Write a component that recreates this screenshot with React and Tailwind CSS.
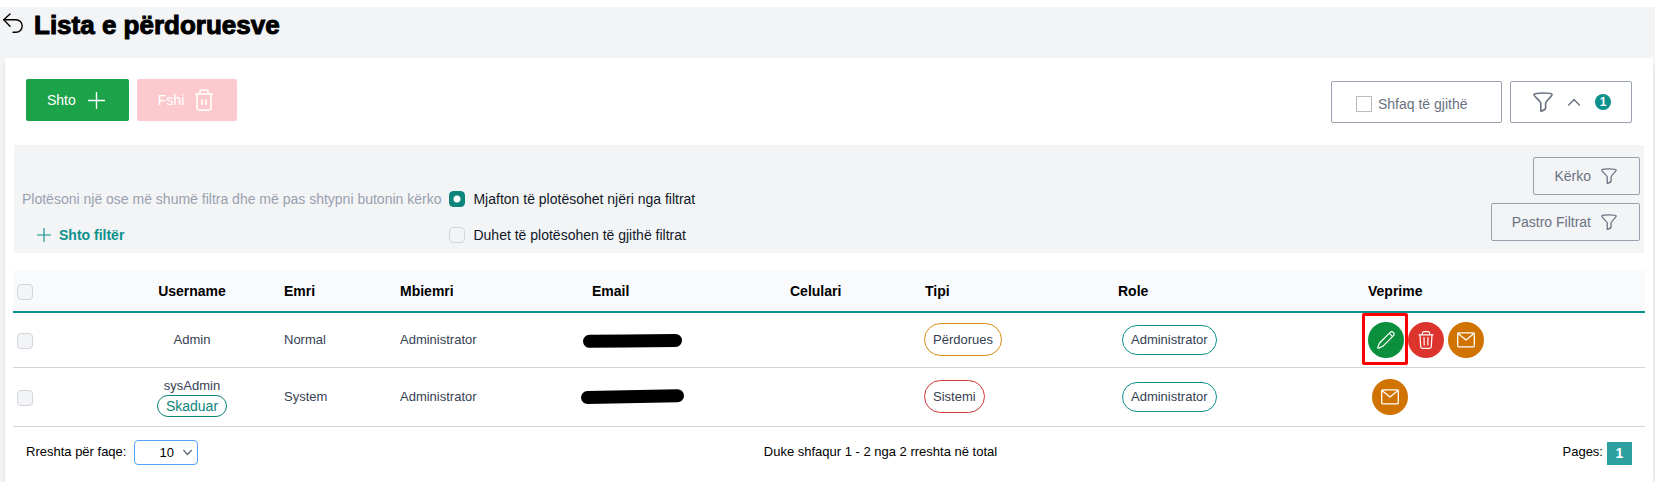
import { useState } from 'react'

const COLUMNS = [
  { label: 'Username', width: 'w-[168px]', align: 'text-center' },
  { label: 'Emri', width: 'w-[116px]', align: 'text-left' },
  { label: 'Mbiemri', width: 'w-[192px]', align: 'text-left' },
  { label: 'Email', width: 'w-[198px]', align: 'text-left' },
  { label: 'Celulari', width: 'w-[135px]', align: 'text-left' },
  { label: 'Tipi', width: 'w-[193px]', align: 'text-left' },
  { label: 'Role', width: 'w-[250px]', align: 'text-left' },
  { label: 'Veprime', width: 'w-[285px]', align: 'text-left' },
]

const USERS = [
  {
    id: 1,
    username: 'Admin',
    emri: 'Normal',
    mbiemri: 'Administrator',
    emailMask: 'M13.5 11.3L50 10.9L99.5 10.5',
    tipi: 'Përdorues',
    tipiBorder: 'border-[#d98a12]',
    role: 'Administrator',
    rowHeight: 'h-[55px]',
    editable: true,
  },
  {
    id: 2,
    username: 'sysAdmin',
    expired: true,
    emri: 'System',
    mbiemri: 'Administrator',
    emailMask: 'M11.5 10.5L50 9.8L101.5 8.8',
    tipi: 'Sistemi',
    tipiBorder: 'border-[#d03434]',
    role: 'Administrator',
    rowHeight: 'h-[59px]',
    editable: false,
  },
]

function Icon({ className, viewBox = '0 0 24 24', strokeWidth = 1.5, children }) {
  return (
    <svg className={`shrink-0 ${className}`} viewBox={viewBox} fill="none" stroke="currentColor"
      strokeWidth={strokeWidth} strokeLinecap="round" strokeLinejoin="round" aria-hidden="true">
      {children}
    </svg>
  )
}

function BackIcon() {
  return (
    <Icon className="w-5 h-5" viewBox="0 0 20 20" strokeWidth={1.4}>
      <path d="M7 1L0.8 6.8L7 13.2" />
      <path d="M1 6.8H13A6.2 6.2 0 0 1 13 19.2H10" />
    </Icon>
  )
}

function PlusIcon({ className }) {
  return (
    <Icon className={className} viewBox="0 0 16 16" strokeWidth={1.3}>
      <path d="M8 0.5V15.5M0.5 8H15.5" />
    </Icon>
  )
}

function FunnelIcon({ className }) {
  return (
    <Icon className={className} viewBox="0 0 20 20" strokeWidth={1.6}>
      <path d="M0.9 2.6C0.9 1.6 5 1 10 1S19.1 1.6 19.1 2.6C19.1 4.4 13 8.6 12.6 11.2V16.2C12.2 17.6 10.2 18.6 7.8 19.1V11.2C7.2 8.8 0.9 4.4 0.9 2.6Z" />
    </Icon>
  )
}

// Koshi me kapak të rrumbullakosur, për butonin "Fshi"
function BinIcon() {
  return (
    <Icon className="w-[18px] h-[22px]" viewBox="0 0 18 22" strokeWidth={1.6}>
      <path d="M0.8 5H17.2M4.8 5V3.6A2.6 2.6 0 0 1 7.4 1H10.6A2.6 2.6 0 0 1 13.2 3.6V5" />
      <path d="M2 5V18.6A2.6 2.6 0 0 0 4.6 21.2H13.4A2.6 2.6 0 0 0 16 18.6V5M7 11V15.5M11 11V15.5" />
    </Icon>
  )
}

function TrashIcon() {
  return (
    <Icon className="w-[18px] h-[18px]" viewBox="0 0 18 18" strokeWidth={1.2}>
      <path d="M2 3.8H16M5.4 3.8V2.3A1.6 1.6 0 0 1 7 0.7H11A1.6 1.6 0 0 1 12.6 2.3V3.8" />
      <path d="M3 4L3.7 15.7A1.7 1.7 0 0 0 5.4 17.3H12.6A1.7 1.7 0 0 0 14.3 15.7L15 4" />
      <path d="M7 6.6L7.2 14M11 6.6L10.8 14" />
    </Icon>
  )
}

function PencilIcon() {
  return (
    <Icon className="w-[18px] h-[18px]" viewBox="0 0 18 18" strokeWidth={1.2}>
      <path d="M0.7 16.4L2.6 12L13.2 1.4A2 2 0 0 1 16.2 1.4L16.5 1.7A2 2 0 0 1 16.5 4.6L6 15.1L1.6 17.2A0.7 0.7 0 0 1 0.7 16.4Z" />
      <path d="M12.4 2.4L15.4 5.4" />
    </Icon>
  )
}

function MailIcon() {
  return (
    <Icon className="w-[18px] h-[18px]" viewBox="0 0 18 18" strokeWidth={1.3}>
      <rect x="0.7" y="1.8" width="16.6" height="14" rx="1" />
      <path d="M1 2.6L9 9L17 2.6" />
    </Icon>
  )
}

function RowCheckbox({ label }) {
  return (
    <input type="checkbox" aria-label={label}
      className="block appearance-none w-4 h-4 ml-1 mt-[3px] rounded-sm border border-gray-300 bg-gray-100 checked:bg-teal-700" />
  )
}

function ActionButton({ label, color, children }) {
  return (
    <button aria-label={label}
      className={`w-9 h-9 rounded-full flex items-center justify-center text-white ${color}`}>
      {children}
    </button>
  )
}

function FilterMode({ checked, onChange, children }) {
  return (
    <label className="flex items-center gap-2 text-sm text-gray-900">
      <input type="radio" name="filterMode" checked={checked} onChange={onChange}
        className="appearance-none w-4 h-4 rounded-sm border border-gray-300 bg-gray-100 bg-origin-border checked:border-[#0d857b] checked:bg-[radial-gradient(circle,#ffffff_3px,#0d857b_4px)]" />
      {children}
    </label>
  )
}

export default function App() {
  const [mode, setMode] = useState('any')
  const [showAll, setShowAll] = useState(false)
  const [pageSize, setPageSize] = useState('10')

  return (
    <main className="min-h-screen flex flex-col bg-gray-100 border-t-[7px] border-white font-['Liberation_Sans',Arial,sans-serif] text-black">

      {/* Titulli */}
      <header className="flex items-start gap-[11px] px-[3px] pt-[2px] h-[51px]">
        <a href="#" aria-label="Kthehu" className="mt-1">
          <BackIcon />
        </a>
        <h1 className="text-[26px] leading-8 font-black [-webkit-text-stroke:1px_black]">Lista e përdoruesve</h1>
      </header>

      <section className="flex-1 ml-[5px] mr-[2px] bg-white shadow-md">

        {/* Butonat kryesorë */}
        <div className="flex items-start justify-between px-[21px] pt-[21px]">
          <div className="flex gap-2">
            <button className="flex items-center gap-3 h-[42px] pl-[21px] pr-6 rounded-xs bg-[#1ca34a] text-white text-sm">
              Shto
              <PlusIcon className="w-[17px] h-[17px]" />
            </button>
            <button disabled className="flex items-center gap-[11px] h-[42px] pl-[21px] pr-6 rounded-xs bg-[#fccace] text-white text-sm">
              Fshi
              <BinIcon />
            </button>
          </div>

          <div className="flex gap-2 pt-[2px] text-gray-500">
            <label className="flex items-center gap-[6px] w-[171px] h-[42px] pl-6 pt-1 border border-gray-400 rounded-xs text-sm">
              <input type="checkbox" checked={showAll} onChange={e => setShowAll(e.target.checked)}
                className="appearance-none w-4 h-4 border border-[#b9bcc2] bg-white checked:bg-teal-700" />
              Shfaq të gjithë
            </label>
            <button aria-label="Filtrat" className="flex items-center gap-[15px] w-[122px] h-[42px] pl-[22px] border border-gray-400 rounded-xs">
              <FunnelIcon className="w-5 h-5" />
              <Icon className="w-3 h-3" viewBox="0 0 12 12" strokeWidth={1.4}>
                <path d="M0.7 9L6 3.4L11.3 9" />
              </Icon>
              <span className="w-4 h-4 rounded-full bg-[#0d918c] text-white text-xs leading-4 font-bold">1</span>
            </button>
          </div>
        </div>

        {/* Paneli i filtrave */}
        <div className="flex justify-between mx-[9px] mt-[22px] h-[108px] pl-2 pr-1 bg-gray-100">
          <div className="grid grid-cols-[auto_auto] grid-rows-[36px_36px] items-center gap-x-2 pt-9">
            <p className="text-sm text-gray-400">Plotësoni një ose më shumë filtra dhe më pas shtypni butonin kërko</p>
            <FilterMode checked={mode === 'any'} onChange={() => setMode('any')}>
              Mjafton të plotësohet njëri nga filtrat
            </FilterMode>
            <button className="justify-self-start flex items-center gap-2 pl-[15px] text-sm font-bold text-[#0d918c]">
              <PlusIcon className="w-[14px] h-[14px]" />
              Shto filtër
            </button>
            <FilterMode checked={mode === 'all'} onChange={() => setMode('all')}>
              Duhet të plotësohen të gjithë filtrat
            </FilterMode>
          </div>

          <div className="flex flex-col items-end gap-2 pt-3 text-sm text-gray-500">
            <button className="flex items-center gap-[10px] h-[38px] pl-5 pr-[22px] border border-gray-400 rounded-xs">
              Kërko
              <FunnelIcon className="w-4 h-4" />
            </button>
            <button className="flex items-center gap-[10px] h-[38px] pl-5 pr-[22px] border border-gray-400 rounded-xs">
              Pastro Filtrat
              <FunnelIcon className="w-4 h-4" />
            </button>
          </div>
        </div>

        {/* Tabela */}
        <div className="mx-2 mt-[17px]">
          <table className="w-full table-fixed border-collapse text-[13px] leading-[18px] text-gray-700">
            <thead>
              <tr className="h-[42px] bg-gray-50 border-b-2 border-[#0d918c] text-sm text-black">
                <th className="w-[95px]">
                  <RowCheckbox label="Zgjidh të gjithë" />
                </th>
                {COLUMNS.map(col => (
                  <th key={col.label} className={`px-2 font-bold ${col.width} ${col.align}`}>
                    {col.label}
                  </th>
                ))}
              </tr>
            </thead>
            <tbody>
              {USERS.map(user => (
                <tr key={user.id} className={`border-b border-gray-300 ${user.rowHeight}`}>
                  <td><RowCheckbox label={`Zgjidh ${user.username}`} /></td>
                  <td className="px-2 text-center">
                    {user.username}
                    {user.expired && (
                      <span className="block w-fit mx-auto px-2 h-[22px] leading-5 border border-[#0d857b] rounded-full text-sm text-[#0d857b]">
                        Skaduar
                      </span>
                    )}
                  </td>
                  <td className="px-2">{user.emri}</td>
                  <td className="px-2">{user.mbiemri}</td>
                  <td>
                    <svg className="w-[110px] h-5 -ml-2" viewBox="0 0 110 20" fill="none" stroke="black"
                      strokeWidth="13" strokeLinecap="round" strokeLinejoin="round" aria-hidden="true">
                      <path d={user.emailMask} />
                    </svg>
                  </td>
                  <td />
                  <td className="pl-[7px]">
                    <span className={`inline-flex items-center h-[33px] px-2 border rounded-full ${user.tipiBorder}`}>
                      {user.tipi}
                    </span>
                  </td>
                  <td className="pl-3">
                    <span className="inline-flex items-center h-[30px] px-2 border border-[#0d918c] rounded-full">
                      {user.role}
                    </span>
                  </td>
                  <td className="pl-2">
                    {user.editable ? (
                      <div className="flex gap-1">
                        <div className="relative">
                          <ActionButton label="Ndrysho" color="bg-[#0a8f3c]"><PencilIcon /></ActionButton>
                          <span className="absolute -left-[6px] -top-[9px] w-[46px] h-[52px] border-3 border-[#ff0000] rounded-xs pointer-events-none" />
                        </div>
                        <ActionButton label="Fshi" color="bg-[#dd352e]"><TrashIcon /></ActionButton>
                        <ActionButton label="Dërgo email" color="bg-[#d17300]"><MailIcon /></ActionButton>
                      </div>
                    ) : (
                      <div className="flex pl-1">
                        <ActionButton label="Dërgo email" color="bg-[#d17300]"><MailIcon /></ActionButton>
                      </div>
                    )}
                  </td>
                </tr>
              ))}
            </tbody>
          </table>
        </div>

        {/* Faqosja */}
        <footer className="flex items-start justify-between px-[21px] pt-[13px] text-[13px] leading-6">
          <div className="flex items-center gap-2">
            <label htmlFor="pageSize">Rreshta për faqe:</label>
            <div className="relative">
              <select id="pageSize" value={pageSize} onChange={e => setPageSize(e.target.value)}
                className="block appearance-none w-16 h-[25px] pl-6 border border-blue-400 rounded-sm bg-white">
                <option>10</option>
                <option>25</option>
                <option>50</option>
              </select>
              <Icon className="absolute right-[6px] top-2 w-[9px] h-[9px] text-gray-500 pointer-events-none" viewBox="0 0 9 9">
                <path d="M0.8 2.6L4.5 6.4L8.2 2.6" />
              </Icon>
            </div>
          </div>
          <p>Duke shfaqur 1 - 2 nga 2 rreshta në total</p>
          <div className="flex gap-1">
            <span>Pages:</span>
            <button aria-current="page" className="w-[25px] h-[23px] mt-[2px] bg-[#2c9f9f] text-white text-sm leading-[23px] font-bold">
              1
            </button>
          </div>
        </footer>
      </section>
    </main>
  )
}
